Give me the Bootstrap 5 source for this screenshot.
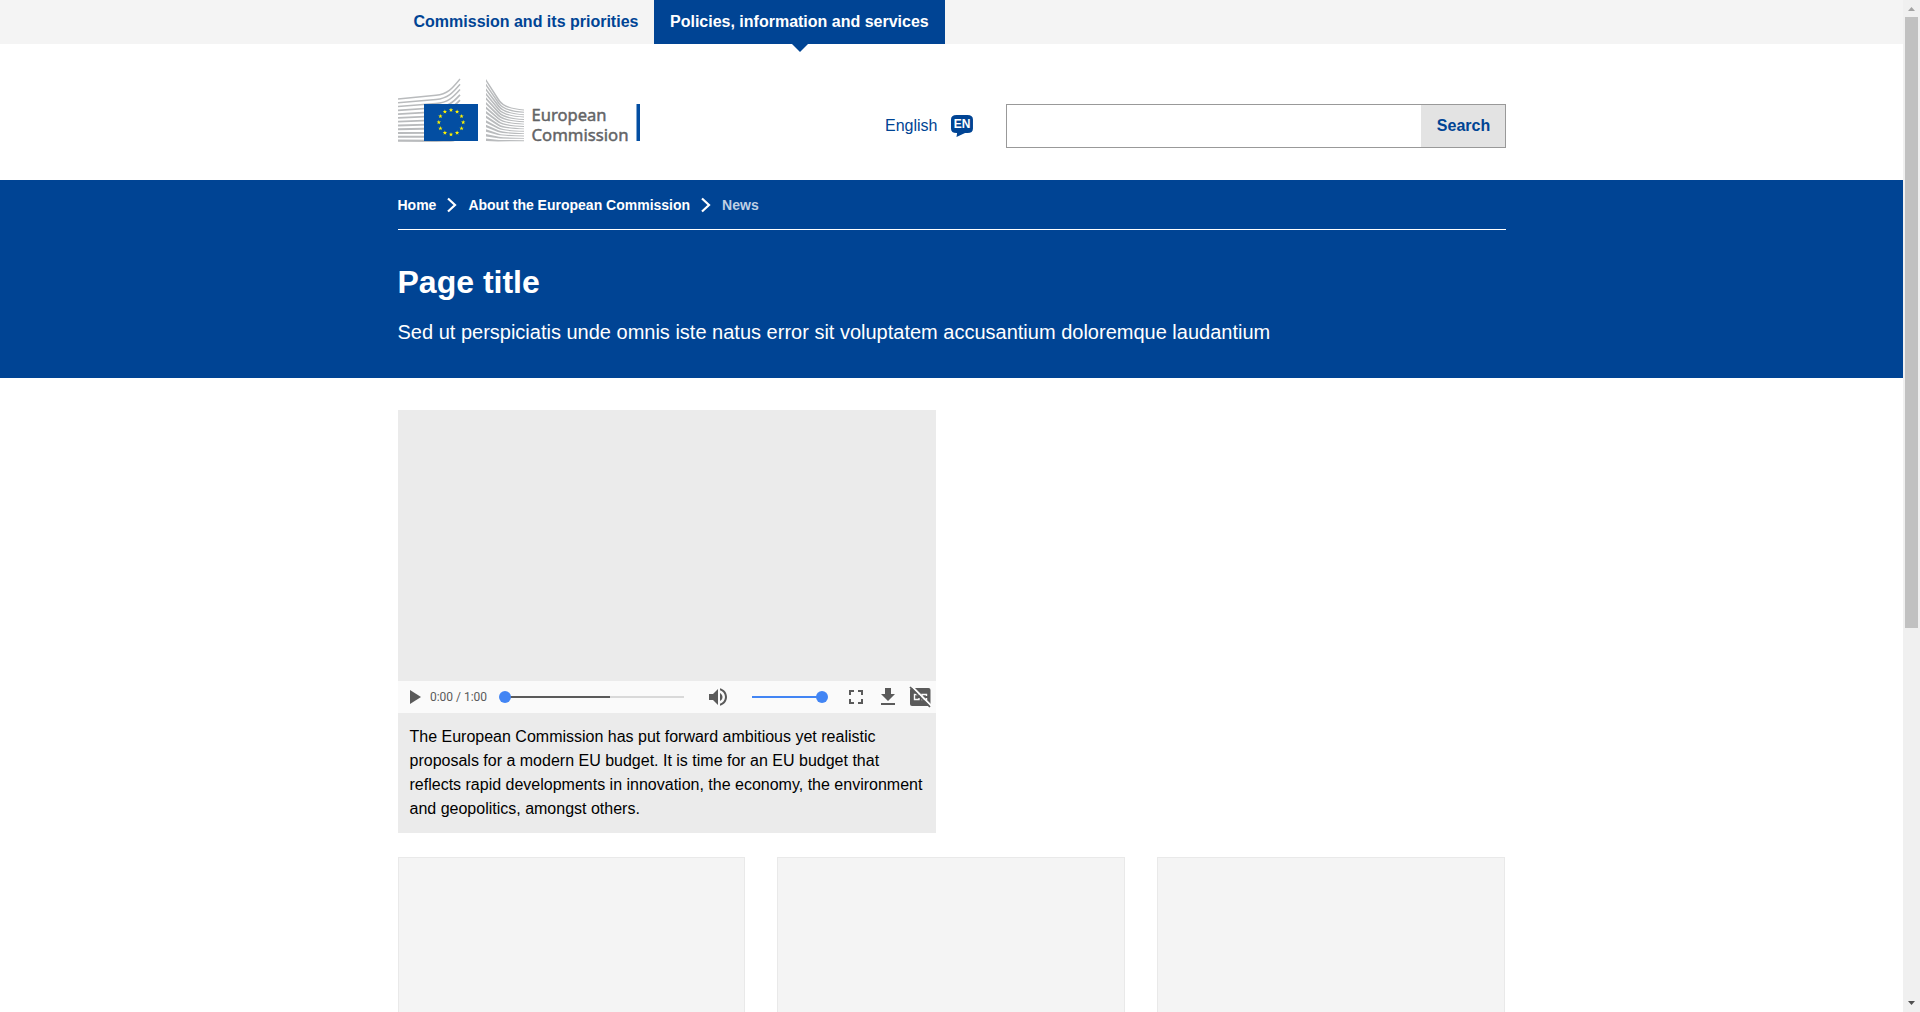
<!DOCTYPE html>
<html lang="en">
<head>
<meta charset="utf-8">
<title>Page title - European Commission</title>
<link rel="stylesheet" href="https://cdn.jsdelivr.net/npm/bootstrap@5.3.0/dist/css/bootstrap.min.css">
<style>
  :root { --ec-blue: #004494; }
  html, body { height: 100%; overflow: hidden; }
  body { font-family: Arial, "Liberation Sans", sans-serif; color: #000; font-size: 16px; line-height: 24px; }
  .page-main { height: 1012px; overflow: hidden; min-width: 0; }
  .ec-wrap { width: 1140px; margin: 0 auto; padding: 0 16px; }
  .top-tabs { background: #f4f4f4; height: 44px; }
  .top-tabs .nav-link { height: 44px; padding: 10px 0 10px 16px; font-weight: 700; color: var(--ec-blue); line-height: 23px; white-space: nowrap; }
  .tab-first { width: 256.5px; }
  .tab-second { width: 291px; }
  .top-tabs .nav-link.active { background: var(--ec-blue); color: #fff; position: relative; }
  .top-tabs .nav-link.active::after { content: ""; position: absolute; left: 50%; top: 44px; margin-left: -8px; border: 8px solid transparent; border-top-color: var(--ec-blue); border-bottom: 0; }
  .site-head { height: 136px; }
  .ec-logo { margin-top: 32px; }
  .lang-link { color: var(--ec-blue); text-decoration: none; margin-top: 70px; margin-right: 32px; height: 24px; gap: 13px; }
  .search-form { width: 500px; height: 44px; margin-top: 60px; border: 1px solid #999; }
  .search-form .form-control { border: 0; }
  .search-form .btn { width: 84px; background: #e3e3e3; color: var(--ec-blue); font-weight: 700; padding: 0 0 0 2px; }
  .page-hero { background: var(--ec-blue); color: #fff; height: 198px; }
  .crumbs { height: 50px; border-bottom: 1px solid #fff; font-size: 14px; font-weight: 700; }
  .crumbs a { color: #fff; text-decoration: none; }
  .crumb-now { color: #bfd0e4; }
  .hero-title { font-size: 32px; font-weight: 700; line-height: 40px; margin: 32px 0 0; }
  .hero-sub { font-size: 20px; line-height: 28px; margin: 16px 0 0; }
  .video-col { width: 538px; margin-top: 32px; background: #ebebeb; }
  .video-pic { height: 271px; }
  .video-bar { height: 32px; background: #fafafa; }
  .video-cap { padding: 12px; height: 120px; margin: 0; white-space: nowrap; }
  .tile-row { gap: 32px; margin: 24px .5px 0 0; }
  .tile { height: 180px; background: #f4f4f4; border: 1px solid #e9e9e9; }
  .scroll-track { width: 17px; background: #f0f0f0; height: 1012px; }
  .scroll-thumb { width: 13px; height: 611px; background: #c1c1c1; }
</style>
<script src="https://cdn.jsdelivr.net/npm/bootstrap@5.3.0/dist/js/bootstrap.bundle.min.js"></script>
</head>
<body>
<div class="d-flex">
  <div class="page-main flex-grow-1">
    <div class="top-tabs">
      <nav class="nav ec-wrap flex-nowrap">
        <a class="nav-link tab-first" href="#">Commission and its priorities</a>
        <a class="nav-link tab-second active" href="#">Policies, information and services</a>
      </nav>
    </div>
    <header class="site-head">
      <div class="ec-wrap d-flex align-items-start">
        <svg class="ec-logo me-auto" width="244" height="68" viewBox="0 0 244 68" role="img" aria-label="European Commission">
          <g id="leftLines" fill="none" stroke="#b9bbbd"></g>
          <g id="rightLines" fill="#b9bbbd"></g>
          <rect x="26" y="28" width="54" height="37" fill="#034ea2"/>
          <g id="euStars" fill="#fff200"></g>
          <g font-family="'Noto Sans','Open Sans',sans-serif" font-size="16.500" font-weight="400" fill="#636466" stroke="#636466" stroke-width=".45">
            <text x="133.500" y="45" textLength="75" lengthAdjust="spacingAndGlyphs">European</text>
            <text x="133.500" y="64.500" textLength="97" lengthAdjust="spacingAndGlyphs">Commission</text>
          </g>
          <rect x="238.500" y="28" width="3.500" height="37" fill="#034ea2"/>
        </svg>
        <a class="lang-link d-flex align-items-center" href="#">
          <span>English</span>
          <svg width="23" height="24" viewBox="0 0 23 24"><path d="M4.500 1H13.500Q18 1 18 5.500V14.500Q18 19 13.500 19H11.500L4.500 23 5 19H4.500Q0 19 0 14.500V5.500Q0 1 4.500 1Z" fill="#004494"/></svg>
        </a>
        <form class="search-form d-flex">
          <input class="form-control rounded-0 shadow-none" type="text" aria-label="Search">
          <button class="btn rounded-0 border-0 flex-shrink-0" type="button">Search</button>
        </form>
      </div>
    </header>
    <section class="page-hero">
      <div class="ec-wrap">
        <nav class="crumbs d-flex align-items-center">
          <a href="#">Home</a>
          <svg width="32" height="16" viewBox="0 0 32 16"><path d="M12 1.500 19 8l-7 6.500" fill="none" stroke="#fff" stroke-width="2.200"/></svg>
          <a href="#">About the European Commission</a>
          <svg width="32" height="16" viewBox="0 0 32 16"><path d="M12 1.500 19 8l-7 6.500" fill="none" stroke="#fff" stroke-width="2.200"/></svg>
          <span class="crumb-now">News</span>
        </nav>
        <h1 class="hero-title">Page title</h1>
        <p class="hero-sub">Sed ut perspiciatis unde omnis iste natus error sit voluptatem accusantium doloremque laudantium</p>
      </div>
    </section>
    <main class="ec-wrap">
      <div class="video-col">
        <div class="video-pic"></div>
        <div class="video-bar">
          <svg class="d-block" width="538" height="32" viewBox="0 0 538 32" fill="#5a5a5a">
            <path d="M12 9v14l11-7z"/>
            <text x="32" y="20" font-family="Roboto,sans-serif" font-size="12" textLength="57">0:00 / 1:00</text>
            <path fill="#d9d9d9" d="M212 15h74v2h-74z"/><path d="M107 15h105v2h-105z"/>
            <circle cx="107" cy="16" r="6" fill="#4285f4"/>
            <path transform="translate(308 4)" d="M3 9v6h4l5 5V4L7 9H3zm13.500 3c0-1.770-1.020-3.290-2.500-4.030v8.050c1.480-.73 2.500-2.250 2.500-4.020zM14 3.230v2.060c2.890.86 5 3.540 5 6.710s-2.110 5.850-5 6.710v2.060c4.010-.91 7-4.490 7-8.770s-2.990-7.860-7-8.770z"/>
            <path fill="#4285f4" d="M354 15h70v2h-70z"/><circle cx="424" cy="16" r="6" fill="#4285f4"/>
            <path transform="translate(446 4)" d="M7 14H5v5h5v-2H7v-3zm-2-4h2V7h3V5H5v5zm12 7h-3v2h5v-5h-2v3zM14 5v2h3v3h2V5h-5z"/>
            <path transform="translate(478 4)" d="M19 9h-4V3H9v6H5l7 7 7-7zM5 18v2h14v-2H5z"/>
            <path d="M514 7h16.500q2 0 2 2v14q0 2-2 2H514q-2 0-2-2V9q0-2 2-2z"/>
            <path d="M521 13.500h-4.500v5h4.500v-1.500M528.500 15v-1.500H524v5h4.500V17" fill="none" stroke="#fafafa" stroke-width="1.400"/>
            <path d="M514 5.500 533.500 25" stroke="#fafafa" stroke-width="2"/><path d="M512 6 532 26" stroke="#5a5a5a" stroke-width="1.700"/>
          </svg>
        </div>
        <p class="video-cap">The European Commission has put forward ambitious yet realistic<br>proposals for a modern EU budget. It is time for an EU budget that<br>reflects rapid developments in innovation, the economy, the environment<br>and geopolitics, amongst others.</p>
      </div>
      <div class="tile-row d-flex">
        <div class="tile flex-fill"></div>
        <div class="tile flex-fill"></div>
        <div class="tile flex-fill"></div>
      </div>
    </main>
  </div>
  <div class="scroll-track d-flex flex-column align-items-center flex-shrink-0">
    <svg width="17" height="17" viewBox="0 0 17 17"><path d="M5 11h7L8.500 7z" fill="#a3a3a3"/></svg>
    <div class="scroll-thumb"></div>
    <svg class="mt-auto" width="17" height="17" viewBox="0 0 17 17"><path d="M5 6h7L8.500 10z" fill="#505050"/></svg>
  </div>
</div>
<script>
  const svg = (tag, attrs, parent, text) => {
    const el = document.createElementNS("http://www.w3.org/2000/svg", tag);
    for (const k in attrs) el.setAttribute(k, attrs[k]);
    if (text) el.textContent = text;
    parent.appendChild(el);
  };
  // Speech bubble: body stretched to full width, language code on top
  const bubble = document.querySelector(".lang-link svg");
  bubble.querySelector("path").setAttribute("transform", "scale(1.22 1)");
  svg("text", { x: 11, y: 14, "text-anchor": "middle", "font-family": "Liberation Sans, sans-serif", "font-weight": 700, "font-size": 12, fill: "#fff" }, bubble, "EN");

  const left = document.getElementById("leftLines"), right = document.getElementById("rightLines");
  for (let i = 0; i < 12; i++) {
    const y = 23 + i * 3.78, k = 19.3 + i * 4.15;
    svg("path", { d: `M0 ${y}L38 ${k}C50 ${k - 1} 55 ${11.5 + i * 5} 62 ${3 + i * 5.3}`, "stroke-width": 1.4 + i * 0.07 }, left);
  }
  for (let i = 0; i < 14; i++) {
    const t = i / 13, y = 3 + 59.5 * t, k = 26 + 38 * t, q = 32 + 32 * t, e = 33.5 + 30.8 * t;
    svg("path", { d: `M88 ${y}L101 ${k - 3 * (1 - t)}Q106 ${q} 126 ${e}V${e + 0.9}Q105.500 ${q + 1.2} 100 ${k - 3 * (1 - t) + 1.4}L88 ${y + 2.5}Z` }, right);
  }
  const stars = document.getElementById("euStars");
  for (let i = 0; i < 12; i++) {
    const a = i * Math.PI / 6, cx = 53 + 12.2 * Math.sin(a), cy = 46.3 - 12.2 * Math.cos(a), p = [];
    for (let k = 0; k < 10; k++) {
      const r = k % 2 ? 0.95 : 2.3, b = k * Math.PI / 5;
      p.push((cx + r * Math.sin(b)).toFixed(2) + "," + (cy - r * Math.cos(b)).toFixed(2));
    }
    svg("polygon", { points: p.join(" ") }, stars);
  }
</script>
</body>
</html>
